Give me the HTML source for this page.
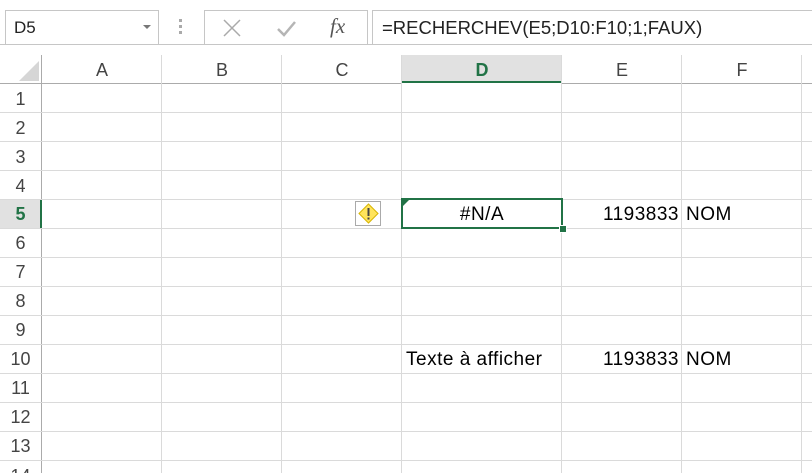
<!DOCTYPE html><html><head><style>
body{margin:0;width:812px;height:473px;overflow:hidden;background:#fff;font-family:"Liberation Sans",sans-serif;position:relative;color:#222}
.a{position:absolute}
.box{border:1px solid #c6c6c6;background:#fff;box-sizing:border-box}
.vl{position:absolute;width:1px;background:#dadada}
.hl{position:absolute;height:1px;background:#dadada}
.ch{position:absolute;top:56px;height:27px;line-height:28px;text-align:center;font-size:18px;color:#444}
.rh{position:absolute;left:0;width:41px;text-align:center;font-size:18px;color:#444;height:29px;line-height:30px;overflow:hidden}
.t{position:absolute;font-size:19px;color:#000;height:29px;line-height:32px;letter-spacing:0.5px}
</style></head><body>
<div class="a box" style="left:5px;top:10px;width:154px;height:35px;font-size:17px;line-height:33px;padding-left:8px">D5</div>
<div class="a" style="left:143px;top:25px;width:0;height:0;border-left:4px solid transparent;border-right:4px solid transparent;border-top:4px solid #777"></div>
<div class="a" style="left:179px;top:19px;width:3px;height:3px;background:#aaa;box-shadow:0 6px #aaa,0 12px #aaa"></div>
<div class="a box" style="left:204px;top:10px;width:164px;height:35px"></div>
<svg class="a" style="left:222px;top:18px" width="20" height="20"><path d="M2 2L18 18M18 2L2 18" stroke="#aaa" stroke-width="1.5"/></svg>
<svg class="a" style="left:275px;top:18px" width="22" height="20"><path d="M3 11L9 17L20 4" stroke="#b5b5b5" stroke-width="2.5" fill="none"/></svg>
<div class="a" style="left:330px;top:14px;font-family:'Liberation Serif',serif;font-style:italic;font-size:21px;color:#555">fx</div>
<div class="a box" style="left:372px;top:10px;width:460px;height:35px;font-size:18.5px;line-height:34px;padding-left:9px">=RECHERCHEV(E5;D10:F10;1;FAUX)</div>
<div class="hl" style="left:0;top:44px;width:812px;background:#c6c6c6"></div>
<svg class="a" style="left:18px;top:60px" width="22" height="22"><path d="M21 1V21H1Z" fill="#d6d6d6"/></svg>
<div class="a" style="left:402px;top:55px;width:159px;height:28px;background:#e1e1e1"></div>
<div class="a" style="left:402px;top:81px;width:159px;height:2px;background:#217346"></div>
<div class="hl" style="left:0;top:83px;width:402px;background:#ababab"></div>
<div class="hl" style="left:561px;top:83px;width:251px;background:#ababab"></div>
<div class="vl" style="left:41px;top:55px;height:418px;background:#ababab"></div>
<div class="ch" style="left:42px;width:120px">A</div>
<div class="ch" style="left:162px;width:120px">B</div>
<div class="ch" style="left:282px;width:120px">C</div>
<div class="ch" style="left:402px;width:160px;color:#217346;font-weight:bold">D</div>
<div class="ch" style="left:562px;width:120px">E</div>
<div class="ch" style="left:682px;width:120px">F</div>
<div class="vl" style="left:161px;top:55px;height:418px"></div>
<div class="vl" style="left:281px;top:55px;height:418px"></div>
<div class="vl" style="left:401px;top:55px;height:418px"></div>
<div class="vl" style="left:561px;top:55px;height:418px"></div>
<div class="vl" style="left:681px;top:55px;height:418px"></div>
<div class="vl" style="left:801px;top:55px;height:418px"></div>
<div class="a" style="left:0;top:199px;width:41px;height:29px;background:#e1e1e1"></div>
<div class="a" style="left:40px;top:199px;width:2px;height:29px;background:#217346"></div>
<div class="hl" style="left:0;top:112px;width:812px"></div>
<div class="hl" style="left:0;top:141px;width:812px"></div>
<div class="hl" style="left:0;top:170px;width:812px"></div>
<div class="hl" style="left:0;top:199px;width:812px"></div>
<div class="hl" style="left:0;top:228px;width:812px"></div>
<div class="hl" style="left:0;top:257px;width:812px"></div>
<div class="hl" style="left:0;top:286px;width:812px"></div>
<div class="hl" style="left:0;top:315px;width:812px"></div>
<div class="hl" style="left:0;top:344px;width:812px"></div>
<div class="hl" style="left:0;top:373px;width:812px"></div>
<div class="hl" style="left:0;top:402px;width:812px"></div>
<div class="hl" style="left:0;top:431px;width:812px"></div>
<div class="hl" style="left:0;top:460px;width:812px"></div>
<div class="rh" style="top:84px">1</div>
<div class="rh" style="top:113px">2</div>
<div class="rh" style="top:142px">3</div>
<div class="rh" style="top:171px">4</div>
<div class="rh" style="top:199px;color:#217346;font-weight:bold">5</div>
<div class="rh" style="top:228px">6</div>
<div class="rh" style="top:257px">7</div>
<div class="rh" style="top:286px">8</div>
<div class="rh" style="top:315px">9</div>
<div class="rh" style="top:344px">10</div>
<div class="rh" style="top:373px">11</div>
<div class="rh" style="top:402px">12</div>
<div class="rh" style="top:431px">13</div>
<div class="rh" style="top:461px;height:12px">14</div>
<div class="a" style="left:401px;top:198px;width:162px;height:31px;box-sizing:border-box;border:2px solid #217346;background:#fff"></div>
<div class="a" style="left:559px;top:225px;width:6px;height:6px;background:#217346;border:1px solid #fff"></div>
<svg class="a" style="left:403px;top:200px" width="6" height="6"><path d="M0 0H6L0 6Z" fill="#217346"/></svg>
<div class="t" style="left:402px;top:199px;width:160px;text-align:center">#N/A</div>
<div class="a" style="left:355px;top:201px;width:26px;height:25px;box-sizing:border-box;border:1px solid #aaa;background:#fff"></div>
<svg class="a" style="left:358px;top:203px" width="21" height="21"><path d="M10.5 1L20 10.5L10.5 20L1 10.5Z" fill="#ffe45c" stroke="#d8b500"/><rect x="9.5" y="5" width="2" height="8" fill="#444"/><rect x="9.5" y="14.5" width="2" height="2" fill="#444"/></svg>
<div class="t" style="left:562px;top:199px;width:117px;text-align:right">1193833</div>
<div class="t" style="left:686px;top:199px">NOM</div>
<div class="t" style="left:406px;top:344px">Texte à afficher</div>
<div class="t" style="left:562px;top:344px;width:117px;text-align:right">1193833</div>
<div class="t" style="left:686px;top:344px">NOM</div>
</body></html>
